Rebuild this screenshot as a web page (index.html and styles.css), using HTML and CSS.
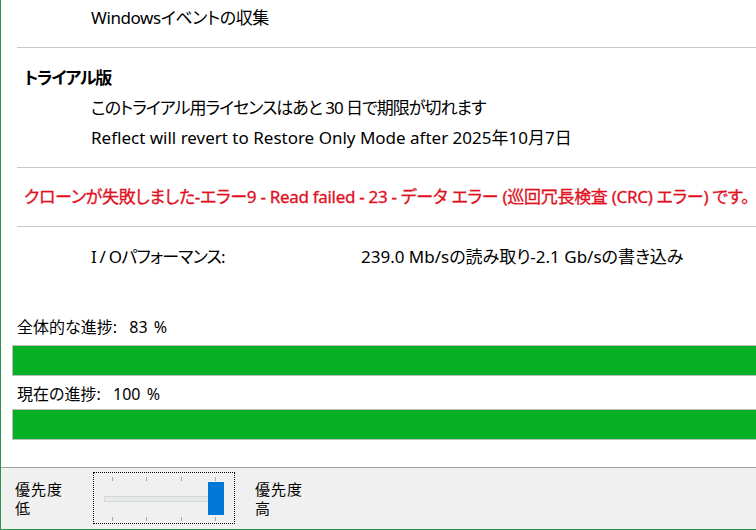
FILE: index.html
```html
<!DOCTYPE html>
<html lang="ja">

<head>
    <meta charset="UTF-8" />
    <meta name="viewport" content="width=device-width, initial-scale=1.0" />
    <title>Clone</title>
    <link rel="stylesheet" href="styles.css">
</head>

<body>
    <div class="window">
        <div class="content">
            <div class="row indent first tight">Windowsイベントの収集</div>
            <hr class="sep">

            <div class="row title">トライアル版</div>
            <div class="row indent kana">このトライアル用ライセンスはあと 30 日で期限が切れます</div>
            <div class="row indent">Reflect will revert to Restore Only Mode after 2025年10月7日</div>
            <hr class="sep">

            <div class="row error">クローンが失敗しました-エラー9 - Read failed - 23 - データ エラー (巡回冗長検査 (CRC) エラー) です。</div>
            <hr class="sep">

            <div class="row indent perf">
                <span class="perf-label">I / Oパフォーマンス:</span>
                <span>239.0 Mb/sの読み取り-2.1 Gb/sの書き込み</span>
            </div>

            <div class="progress">
                <div class="progress-label">全体的な進捗:&nbsp; 83 %</div>
                <div class="bar"><div class="fill" style="width: 100%"></div></div>
                <div class="progress-label second">現在の進捗:&nbsp; 100 %</div>
                <div class="bar"><div class="fill" style="width: 100%"></div></div>
            </div>
        </div>

        <!-- Priority slider panel -->
        <div class="footer">
            <div class="prio">優先度<br>低</div>
            <div class="slider">
                <div class="ticks"><i></i><i></i><i></i><i></i></div>
                <div class="track"><span class="thumb"></span></div>
                <div class="ticks"><i></i><i></i><i></i><i></i></div>
            </div>
            <div class="prio">優先度<br>高</div>
        </div>
    </div>
</body>

</html>
```

FILE: styles.css
```css
:root {
    --color-text: rgb(0, 0, 0);
    --color-error: rgb(224, 16, 30);
    --color-sep: rgb(200, 200, 200);
    --color-green: rgb(6, 176, 37);
    --color-panel: rgb(240, 240, 240);
    --color-frame: rgb(40, 150, 80);
}

* {
    box-sizing: border-box;
}

body {
    margin: 0;
    font-family: "Noto Sans", "Noto Sans CJK JP", sans-serif;
    font-size: 17px;
    /* proportional kana, closer to Yu Gothic UI */
    font-feature-settings: "palt";
    color: var(--color-text);
    background: #fff;
}

.window {
    width: 756px;
    height: 530px;
    overflow: hidden;
    border-left: 1px solid var(--color-frame);
    display: flex;
    flex-direction: column;
}

.content {
    flex: 1;
}

/* Text rows */
.row {
    height: 30px;
    line-height: 30px;
    white-space: nowrap;
}

.first {
    margin-top: 3px;
}

.indent {
    padding-left: 90px;
}

.tight {
    letter-spacing: -0.4px;
}

.kana {
    letter-spacing: -1px;
}

.title {
    padding-left: 23px;
    font-weight: 700;
    margin-top: 15px;
    letter-spacing: -1.2px;
}

.error {
    padding-left: 23px;
    color: var(--color-error);
    margin-top: 14px;
    letter-spacing: -0.3px;
    -webkit-text-stroke: 0.3px var(--color-error);
}

.sep {
    border: 0;
    border-top: 1px solid var(--color-sep);
    margin: 14px 0 0 16px;
    height: 0;
}

.perf {
    display: flex;
    margin-top: 15px;
}

.perf-label {
    width: 270px;
    letter-spacing: -0.8px;
}

/* Progress bars */
.progress {
    margin-top: 44px;
    padding-left: 11px;
}

.progress-label {
    height: 22px;
    line-height: 22px;
    padding-left: 5px;
    font-size: 16px;
    word-spacing: 2px;
}

.progress-label.second {
    margin-top: 7px;
}

.bar {
    margin-top: 7px;
    width: 760px;
    height: 31px;
    border: 1px solid rgb(188, 188, 188);
    background: rgb(230, 230, 230);
}

.progress-label.second + .bar {
    margin-top: 4px;
}

.fill {
    height: 100%;
    background: var(--color-green);
}

/* Bottom panel */
.footer {
    height: 63px;
    background: var(--color-panel);
    border-top: 1px solid rgb(160, 160, 160);
    border-bottom: 1px solid var(--color-frame);
    display: flex;
    align-items: flex-start;
    padding-left: 14px;
}

.prio {
    margin-top: 11px;
    width: 78px;
    line-height: 19px;
    font-family: "Noto Sans CJK JP", sans-serif;
    font-size: 15px;
    letter-spacing: 1px;
}

.slider {
    margin-top: 4px;
    width: 142px;
    height: 52px;
    border: 1px dotted rgb(0, 0, 0);
    padding: 4px 10px 0 10px;
    margin-right: 20px;
}

.ticks {
    display: flex;
    justify-content: space-between;
    padding: 0 8px 0 8px;
    height: 5px;
}

.ticks i {
    width: 1px;
    height: 4px;
    background: rgb(170, 170, 170);
}

.track {
    position: relative;
    margin-top: 14px;
    height: 6px;
    border: 1px solid rgb(214, 214, 214);
    background: rgb(231, 234, 234);
}

.ticks:last-child {
    margin-top: 15px;
}

.thumb {
    position: absolute;
    right: -1px;
    top: -15px;
    width: 16px;
    height: 33px;
    background: rgb(0, 120, 215);
}
```
